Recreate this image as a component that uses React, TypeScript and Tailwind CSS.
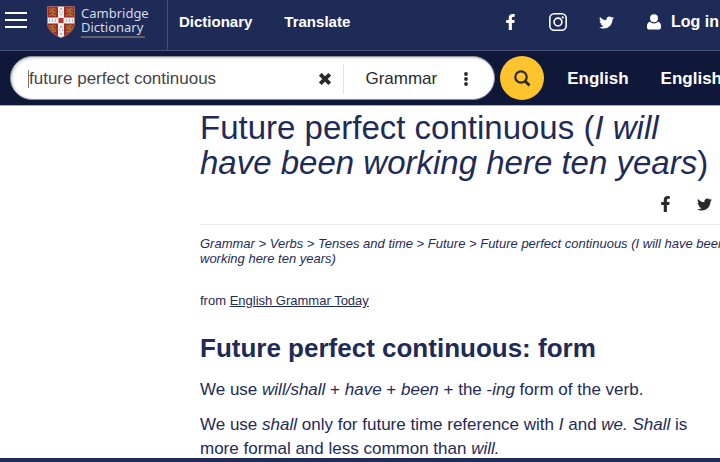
import React from "react";
import { FaFacebookF, FaTwitter } from "react-icons/fa";

function Shield() {
  return (
    <svg viewBox="0 0 28 32" className="h-8 w-7 shrink-0" aria-hidden="true">
      <defs>
        <clipPath id="shield">
          <path d="M0.5 0.5H27.5V18C27.5 24 21 29 14 31.7C7 29 0.5 24 0.5 18Z" />
        </clipPath>
      </defs>
      <g clipPath="url(#shield)">
        <rect width="28" height="32" fill="#a3292a" />
        <g fill="none" stroke="#a8742c" strokeWidth="1.4">
          <path d="M2 3l3 1 1-2 3 2M2 6l4-1 3 2M2 10l3-2 4 2M6 4v6" />
          <path d="M19 3l3 1 1-2 3 2M19 6l4-1 3 2M19 10l3-2 4 2M23 4v6" />
          <path d="M2 20l3 1 1-2 3 2M3 23l3-1 3 2M5 26l4-1M6 21v5" />
          <path d="M19 20l3 1 1-2 3 2M19 23l4-1 3 2M19 26l4-1M23 21v5" />
        </g>
        <path d="M11 0H17V32H11ZM0 11.5H28V17.5H0Z" fill="#f1eeee" />
        <g fill="#b5b1b6">
          <path d="M13 2h2v2h-2zM12 5h1v2h-1zM15 5h1v2h-1zM13 8h2v1h-2zM13 20h2v2h-2zM12 23h1v2h-1zM15 23h1v2h-1zM13 27h2v2h-2z" />
          <path d="M2 13h1v3H2zM5 13h1v3H5zM8 13h1v3H8zM19 13h1v3h-1zM22 13h1v3h-1zM25 13h1v3h-1z" />
        </g>
        <rect x="11.5" y="12" width="5" height="5" fill="#b43730" />
      </g>
      <path d="M0.5 0.5H27.5V18C27.5 24 21 29 14 31.7C7 29 0.5 24 0.5 18Z" fill="none" stroke="#b98a83" strokeWidth="0.6" />
    </svg>
  );
}

function Header() {
  return (
    <header className="flex h-[51px] shrink-0 border-b border-[#464f75] bg-[#1e2b57] text-white">
      <div className="flex w-[168px] shrink-0 items-start border-r border-[#464f75] pl-[5px]">
        <button aria-label="Menu" className="mt-3 flex w-[22px] flex-col gap-[5px]">
          <span className="h-[2px] w-full bg-white" />
          <span className="h-[2px] w-full bg-white" />
          <span className="h-[2px] w-full bg-white" />
        </button>
        <a href="#home" className="ml-5 mt-[6px] flex gap-[6px]">
          <Shield />
          <span className="font-['Noto_Sans',sans-serif] text-[13px] leading-[14px] text-[#d5d9e6]">
            Cambridge
            <br />
            Dictionary
            <span className="mt-[2px] block h-[2px] w-16 bg-[#62616b]" />
          </span>
        </a>
      </div>
      <nav className="flex items-center gap-8 pb-[6px] pl-[11px] text-[15px] font-bold">
        <a href="#dictionary">Dictionary</a>
        <a href="#translate">Translate</a>
      </nav>
      <div className="ml-auto flex shrink-0 items-center pb-[6px] pr-px">
        <a href="#facebook" aria-label="Facebook">
          <FaFacebookF className="h-4 w-[11px]" />
        </a>
        <a href="#instagram" aria-label="Instagram" className="ml-[33px]">
          <svg viewBox="0 0 18 18" className="size-[18px]" fill="none" stroke="currentColor" strokeWidth="1.6">
            <rect x="0.8" y="0.8" width="16.4" height="16.4" rx="4.4" />
            <circle cx="9" cy="9" r="3.9" />
            <circle cx="13.7" cy="4.4" r="1.1" fill="currentColor" stroke="none" />
          </svg>
        </a>
        <a href="#twitter" aria-label="Twitter" className="ml-8">
          <FaTwitter className="size-[15px]" />
        </a>
        <a href="#login" className="ml-[33px] flex items-center gap-[10px] text-base font-bold">
          <svg viewBox="0 0 14 16" className="h-4 w-[14px]" fill="currentColor" aria-hidden="true">
            <circle cx="7" cy="4.2" r="4" />
            <path d="M3 7.7C4.1 8.9 5.5 9.4 7 9.4C8.5 9.4 9.9 8.9 11 7.7C13 8.2 14 9.8 14 12V13.4C14 14.7 13 15.5 11.8 15.5H2.2C1 15.5 0 14.7 0 13.4V12C0 9.8 1 8.2 3 7.7Z" />
          </svg>
          Log in
        </a>
      </div>
    </header>
  );
}

function SearchBar() {
  return (
    <div className="flex h-[55px] shrink-0 items-center border-b border-[#a9abbf] bg-[#10183a] pl-[10px] text-white">
      <form className="flex min-w-0 flex-1 items-center" onSubmit={(e) => e.preventDefault()}>
        <div className="flex h-11 min-w-0 flex-1 items-center rounded-full border border-[#8c8f9f] bg-white pl-[17px] pt-px text-[#2a2a2a] shadow-[inset_1px_1px_3px_#c8c8c8]">
          <span className="h-[18px] w-px bg-[#777777]" />
          <input
            aria-label="Search"
            defaultValue="future perfect continuous"
            className="min-w-0 flex-1 text-[17px] text-[#444444] outline-none"
          />
          <button type="button" aria-label="Clear">
            <svg viewBox="0 0 12 12" className="size-3" stroke="currentColor" strokeWidth="3.8">
              <path d="M1.3 1.3L10.7 10.7M10.7 1.3L1.3 10.7" />
            </svg>
          </button>
          <span className="ml-3 h-[30px] w-px bg-[#e3e3e3]" />
          <button type="button" className="ml-[21px] flex items-center text-[17px]">
            Grammar
            <svg viewBox="0 0 4 14" className="ml-[27px] mr-[26px] h-[14px] w-1" fill="currentColor" aria-hidden="true">
              <circle cx="2" cy="2" r="1.9" />
              <circle cx="2" cy="7" r="1.9" />
              <circle cx="2" cy="12" r="1.9" />
            </svg>
          </button>
        </div>
        <button aria-label="Search" className="ml-[5px] flex size-11 shrink-0 items-center justify-center rounded-full bg-[#fec32d] text-[#2a2a2a]">
          <svg viewBox="0 0 17 17" className="size-[17px]" fill="none" stroke="currentColor" strokeWidth="2.2">
            <circle cx="7" cy="7" r="5.7" />
            <path d="M11 11L15.5 15.5" strokeWidth="2.8" />
          </svg>
        </button>
      </form>
      <nav className="-mr-[2px] ml-[23px] flex shrink-0 gap-8 pt-px text-[17px] font-bold">
        <a href="#english">English</a>
        <a href="#english-learner">English</a>
      </nav>
    </div>
  );
}

export default function App() {
  return (
    <div className="flex h-screen flex-col overflow-hidden bg-white font-['Liberation_Sans',Arial,sans-serif] text-[#1e2b57]">
      <Header />
      <SearchBar />
      <main className="-mr-2 ml-[200px] min-h-0 flex-1 overflow-hidden">
        <h1 className="mt-1 text-[33px] leading-[35px]">
          Future perfect continuous (<i>I will have been working here ten years</i>)
        </h1>
        <div className="mt-4 flex items-center justify-end gap-[26px] border-b border-[#e9e9ec] pb-3 pr-4 text-[#2a2a2a]">
          <a href="#share-facebook" aria-label="Share on Facebook">
            <FaFacebookF className="h-4 w-[11px]" />
          </a>
          <a href="#share-twitter" aria-label="Share on Twitter">
            <FaTwitter className="size-[15px]" />
          </a>
        </div>
        <nav aria-label="Breadcrumb" className="mt-[11px] text-[13px] italic leading-[15px]">
          <a href="#grammar">Grammar</a> &gt; <a href="#verbs">Verbs</a> &gt; <a href="#tenses">Tenses and time</a> &gt;{" "}
          <a href="#future">Future</a> &gt; <a href="#form">Future perfect continuous (I will have been working here ten years)</a>
        </nav>
        <p className="mt-[27px] text-[13px] leading-[15px]">
          from{" "}
          <a href="#today" className="underline">
            English Grammar Today
          </a>
        </p>
        <h2 className="mt-6 text-[26px] font-bold leading-8">Future perfect continuous: form</h2>
        <p className="mt-[14px] text-[17px] leading-6">
          We use <i>will/shall</i> + <i>have</i> + <i>been</i> + the -<i>ing</i> form of the verb.
        </p>
        <p className="mt-[11px] text-[17px] leading-6">
          We use <i>shall</i> only for future time reference with <i>I</i> and <i>we. Shall</i> is more formal and less common than{" "}
          <i>will.</i>
        </p>
      </main>
      <footer className="h-1 shrink-0 bg-[#1e2b57]" />
    </div>
  );
}
